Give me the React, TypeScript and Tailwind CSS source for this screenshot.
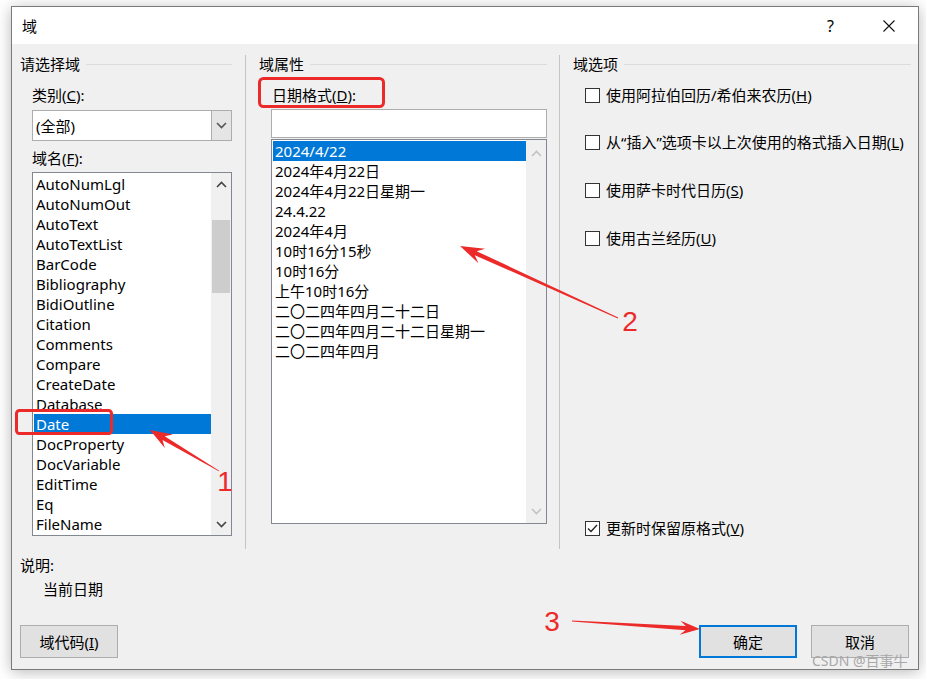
import React from "react";

const fieldNames = [
  "AutoNumLgl",
  "AutoNumOut",
  "AutoText",
  "AutoTextList",
  "BarCode",
  "Bibliography",
  "BidiOutline",
  "Citation",
  "Comments",
  "Compare",
  "CreateDate",
  "Database",
  "Date",
  "DocProperty",
  "DocVariable",
  "EditTime",
  "Eq",
  "FileName",
];

const dateFormats = [
  "2024/4/22",
  "2024年4月22日",
  "2024年4月22日星期一",
  "24.4.22",
  "2024年4月",
  "10时16分15秒",
  "10时16分",
  "上午10时16分",
  "二〇二四年四月二十二日",
  "二〇二四年四月二十二日星期一",
  "二〇二四年四月",
];

function Key({ k }: { k: string }) {
  return <span className="underline underline-offset-[1px]">{k}</span>;
}

function GroupHeader({ title }: { title: string }) {
  return (
    <div className="flex h-[18px] items-center">
      <span>{title}</span>
      <span className="ml-[6px] h-px flex-1 bg-[#dcdcdc]" />
    </div>
  );
}

function Chevron({ up, color }: { up?: boolean; color: string }) {
  return (
    <svg width="11" height="7" viewBox="0 0 11 7">
      <path
        d={up ? "M1 6 L5.5 1.5 L10 6" : "M1 1 L5.5 5.5 L10 1"}
        fill="none"
        stroke={color}
        strokeWidth="1.6"
      />
    </svg>
  );
}

function CheckBox({ checked, className, children }: { checked?: boolean; className?: string; children: React.ReactNode }) {
  return (
    <div className={`flex h-5 items-center ${className ?? ""}`}>
      <span className="ml-[12px] flex h-[15px] w-[15px] items-center justify-center border border-[#333] bg-white">
        {checked ? (
          <svg width="11" height="9" viewBox="0 0 11 9">
            <path d="M1 4.5 L4 7.5 L10 1" fill="none" stroke="#222" strokeWidth="1.3" />
          </svg>
        ) : null}
      </span>
      <span className="ml-[6px]">{children}</span>
    </div>
  );
}

function arrowPoints(x1: number, y1: number, x2: number, y2: number, L: number, W: number) {
  const dx = x2 - x1;
  const dy = y2 - y1;
  const len = Math.hypot(dx, dy);
  const ux = dx / len;
  const uy = dy / len;
  const nx = -uy;
  const ny = ux;
  const bx = x2 - ux * L;
  const by = y2 - uy * L;
  const jx = x2 - ux * L * 0.72;
  const jy = y2 - uy * L * 0.72;
  const pts = [
    [x1 + nx * 0.4, y1 + ny * 0.4],
    [jx + nx * 2.2, jy + ny * 2.2],
    [bx + nx * W, by + ny * W],
    [x2, y2],
    [bx - nx * W, by - ny * W],
    [jx - nx * 2.2, jy - ny * 2.2],
    [x1 - nx * 0.4, y1 - ny * 0.4],
  ];
  return pts.map((p) => `${p[0].toFixed(1)},${p[1].toFixed(1)}`).join(" ");
}

function Annotations() {
  const red = "#ec2a2a";
  return (
    <svg className="pointer-events-none absolute inset-0" width="926" height="679">
      <rect x="259.5" y="78.5" width="124" height="28" rx="4" fill="none" stroke={red} strokeWidth="3" />
      <rect x="16.5" y="410.5" width="95" height="23" rx="3" fill="none" stroke={red} strokeWidth="3" />
      <polygon points={arrowPoints(219, 471, 150, 430, 22, 8)} fill={red} />
      <polygon points={arrowPoints(618, 318, 460, 246, 24, 8)} fill={red} />
      <polygon points={arrowPoints(572, 621, 700, 629, 20, 7)} fill={red} />
      <text x="225" y="491" fill={red} fontSize="28" textAnchor="middle" fontFamily="Liberation Sans, sans-serif">
        1
      </text>
      <text x="630" y="331" fill={red} fontSize="28" textAnchor="middle" fontFamily="Liberation Sans, sans-serif">
        2
      </text>
      <text x="552" y="631" fill={red} fontSize="28" textAnchor="middle" fontFamily="Liberation Sans, sans-serif">
        3
      </text>
    </svg>
  );
}

export default function App() {
  return (
    <div
      className="relative h-[679px] w-[926px] overflow-hidden bg-white text-[15px] leading-5 text-black"
      style={{ fontFamily: '"Noto Sans", "Noto Sans CJK SC", sans-serif' }}
    >
      <div className="ml-[11px] mt-[6px] flex h-[664px] w-[908px] flex-col border border-[#7a7a7a] bg-[#f0f0f0] shadow-[0_2px_14px_rgba(0,0,0,0.28)]">
        {/* title bar */}
        <div className="flex h-[37px] items-center bg-white">
          <span className="ml-[10px]">域</span>
          <span className="ml-auto mr-[49px] text-[16px]">?</span>
          <svg className="mr-[23px]" width="12" height="12" viewBox="0 0 12 12">
            <path d="M0.5 0.5 L11.5 11.5 M11.5 0.5 L0.5 11.5" stroke="#111" strokeWidth="1.1" />
          </svg>
        </div>

        {/* body */}
        <div className="flex flex-1 flex-col pt-[11px]">
          <div className="flex h-[494px]">
            {/* left column */}
            <div className="flex w-[233px] flex-col pl-[8px] pr-[13px]">
              <GroupHeader title="请选择域" />
              <div className="ml-[12px] mt-[12px]">
                类别(<Key k="C" />):
              </div>
              <div className="ml-[12px] mt-[5px] flex h-[31px] border border-[#adadad] bg-white">
                <span className="flex flex-1 items-center pl-[3px]">(全部)</span>
                <span className="flex w-[20px] items-center justify-center border-l border-[#adadad] bg-[#e5e5e5]">
                  <Chevron color="#555" />
                </span>
              </div>
              <div className="ml-[12px] mt-[7px]">
                域名(<Key k="F" />):
              </div>
              <div className="ml-[12px] mt-[4px] flex h-[364px] border border-[#828790] bg-white">
                <div className="flex-1 overflow-hidden pt-px">
                  {fieldNames.map((name) => (
                    <div
                      key={name}
                      className={`ml-px h-5 pl-[2px] ${name === "Date" ? "bg-[#0078d7] text-white" : ""}`}
                    >
                      {name}
                    </div>
                  ))}
                </div>
                <div className="flex w-[20px] flex-col items-center bg-[#f0f0f0]">
                  <div className="flex h-[22px] items-center">
                    <Chevron up color="#444" />
                  </div>
                  <div className="mt-[25px] h-[73px] w-[18px] bg-[#cdcdcd]" />
                  <div className="mt-auto flex h-[22px] items-center">
                    <Chevron color="#444" />
                  </div>
                </div>
              </div>
            </div>
            <div className="w-px bg-[#c4c4c4]" />

            {/* middle column */}
            <div className="flex w-[313px] flex-col pl-[13px] pr-[12px]">
              <GroupHeader title="域属性" />
              <div className="ml-[13px] mt-[12px]">
                日期格式(<Key k="D" />):
              </div>
              <div className="ml-[12px] mt-[4px] h-[29px] border border-[#adadad] bg-white" />
              <div className="ml-[12px] mt-px flex h-[385px] border border-[#828790] bg-white">
                <div className="flex-1 overflow-hidden pt-px">
                  {dateFormats.map((f, i) => (
                    <div key={f} className={`ml-px h-5 pl-[2px] ${i === 0 ? "bg-[#0078d7] text-white" : ""}`}>
                      {f}
                    </div>
                  ))}
                </div>
                <div className="flex w-[20px] flex-col items-center bg-[#f0f0f0]">
                  <div className="flex h-[26px] items-center">
                    <Chevron up color="#c2c2c2" />
                  </div>
                  <div className="mt-auto flex h-[24px] items-center">
                    <Chevron color="#c2c2c2" />
                  </div>
                </div>
              </div>
            </div>
            <div className="w-px bg-[#c4c4c4]" />

            {/* right column */}
            <div className="flex flex-1 flex-col pb-[11px] pl-[13px] pr-[7px]">
              <GroupHeader title="域选项" />
              <CheckBox className="mt-[12px]">
                使用阿拉伯回历/希伯来农历(<Key k="H" />)
              </CheckBox>
              <CheckBox className="mt-[27px]">
                从“插入”选项卡以上次使用的格式插入日期(<Key k="L" />)
              </CheckBox>
              <CheckBox className="mt-[28px]">
                使用萨卡时代日历(<Key k="S" />)
              </CheckBox>
              <CheckBox className="mt-[28px]">
                使用古兰经历(<Key k="U" />)
              </CheckBox>
              <CheckBox checked className="mt-auto">
                更新时保留原格式(<Key k="V" />)
              </CheckBox>
            </div>
          </div>

          {/* description */}
          <div className="mt-[6px] pl-[8px]">说明:</div>
          <div className="mt-[4px] pl-[31px]">当前日期</div>

          {/* buttons */}
          <div className="mb-[11px] mt-auto flex items-center pl-[8px] pr-[9px]">
            <button className="h-[33px] w-[98px] border border-[#adadad] bg-[#e1e1e1]">
              域代码(<Key k="I" />)
            </button>
            <button className="ml-auto h-[33px] w-[98px] border-2 border-[#0078d7] bg-[#e1e1e1]">确定</button>
            <button className="ml-[14px] h-[33px] w-[98px] border border-[#adadad] bg-[#e1e1e1]">取消</button>
          </div>
        </div>
      </div>

      <div className="absolute left-[812px] top-[653px] text-[14px] leading-4 text-[#a8a8a8]">CSDN @百事牛</div>
      <Annotations />
    </div>
  );
}
